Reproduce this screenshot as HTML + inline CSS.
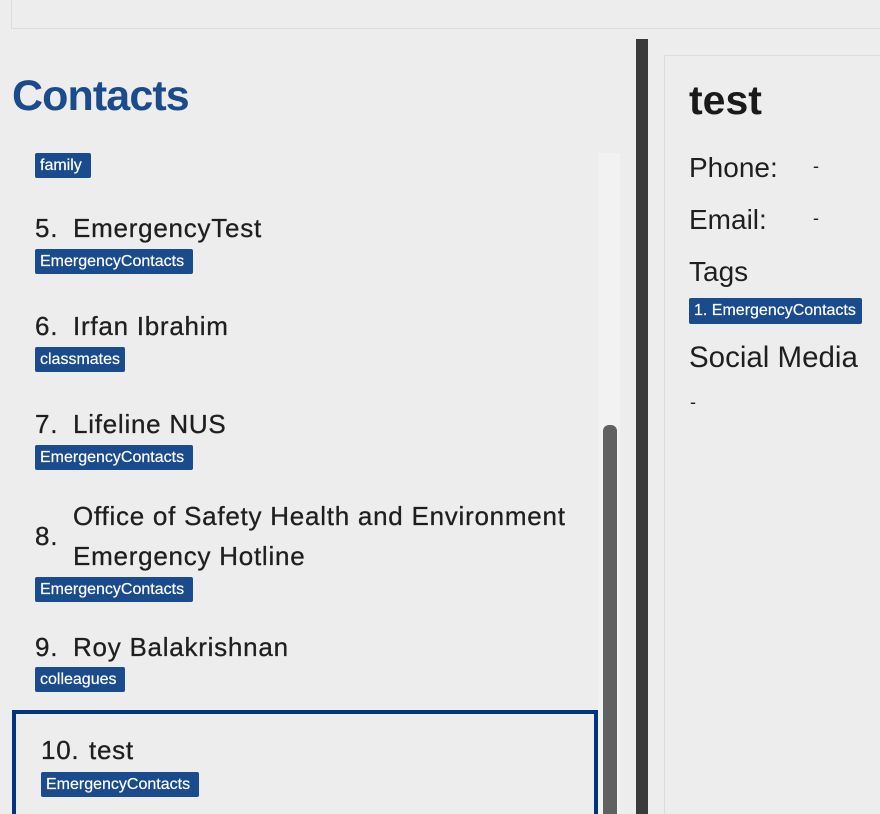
<!DOCTYPE html>
<html style="width:880px;height:814px;overflow:hidden"><head><style>
*{margin:0;padding:0;box-sizing:border-box}
body{width:880px;height:814px;background:#ededed;font-family:"Liberation Sans",sans-serif;color:#1f1f1f;position:relative;overflow:hidden}
.a{position:absolute;white-space:nowrap}
.tag{position:absolute;background:#1a4b8c;color:#fff;font-size:16px;height:25px;line-height:25px;border-radius:2px;padding-left:5px;overflow:hidden;white-space:nowrap;letter-spacing:0px;-webkit-text-stroke:0.2px #fff}
.nm{position:absolute;font-size:26px;line-height:30px;white-space:nowrap;letter-spacing:0.75px;-webkit-text-stroke:0.3px #1f1f1f}
.nm b{font-weight:normal;display:inline-block;width:38px}
.lbl{position:absolute;font-size:28px;line-height:32px;white-space:nowrap;color:#1f1f1f}
</style></head><body>
<div class="a" style="left:11px;top:-1px;width:880px;height:30px;border:1px solid #dcdcdc"></div>
<div class="a" style="left:12px;top:70px;font-size:43px;line-height:52px;color:#1a4b8c;font-weight:bold;letter-spacing:-0.9px">Contacts</div>
<div class="a" style="left:598px;top:153px;width:22px;height:661px;background:#f2f2f2"></div>
<div class="a" style="left:603px;top:425px;width:14px;height:395px;background:#616161;border-radius:6px"></div>
<div class="a" style="left:636px;top:39px;width:12px;height:780px;background:#3a3a3a"></div>
<div class="a" style="left:664px;top:55px;width:230px;height:780px;border:1px solid #dcdcdc"></div>

<div class="tag" style="left:35px;top:153px;width:56px">family</div>
<div class="nm" style="left:35px;top:213px"><b>5.</b>EmergencyTest</div>
<div class="tag" style="left:35px;top:249px;width:158px">EmergencyContacts</div>
<div class="nm" style="left:35px;top:311px"><b>6.</b>Irfan Ibrahim</div>
<div class="tag" style="left:35px;top:347px;width:90px">classmates</div>
<div class="nm" style="left:35px;top:409px"><b>7.</b>Lifeline NUS</div>
<div class="tag" style="left:35px;top:445px;width:158px">EmergencyContacts</div>
<div class="nm" style="left:35px;top:521px"><b>8.</b></div>
<div class="nm" style="left:73px;top:501px">Office of Safety Health and Environment</div>
<div class="nm" style="left:73px;top:541px">Emergency Hotline</div>
<div class="tag" style="left:35px;top:577px;width:158px">EmergencyContacts</div>
<div class="nm" style="left:35px;top:632px"><b>9.</b>Roy Balakrishnan</div>
<div class="tag" style="left:35px;top:667px;width:90px">colleagues</div>
<div class="a" style="left:12px;top:710px;width:586px;height:120px;border:4px solid #003380"></div>
<div class="nm" style="left:41px;top:735px"><b style="width:48px">10.</b>test</div>
<div class="tag" style="left:41px;top:772px;width:158px">EmergencyContacts</div>

<div class="a" style="left:689px;top:74px;font-size:41px;line-height:52px;font-weight:bold;color:#1a1a1a">test</div>
<div class="lbl" style="left:689px;top:152px">Phone:</div>
<div class="lbl" style="left:813px;top:150px;font-size:18px">-</div>
<div class="lbl" style="left:689px;top:204px">Email:</div>
<div class="lbl" style="left:813px;top:202px;font-size:18px">-</div>
<div class="lbl" style="left:689px;top:256px">Tags</div>
<div class="tag" style="left:689px;top:298px;width:173px;height:26px;line-height:26px">1. EmergencyContacts</div>
<div class="lbl" style="left:689px;top:342px;font-size:29.5px">Social Media</div>
<div class="lbl" style="left:690px;top:386px;font-size:18px">-</div>
</body></html>
